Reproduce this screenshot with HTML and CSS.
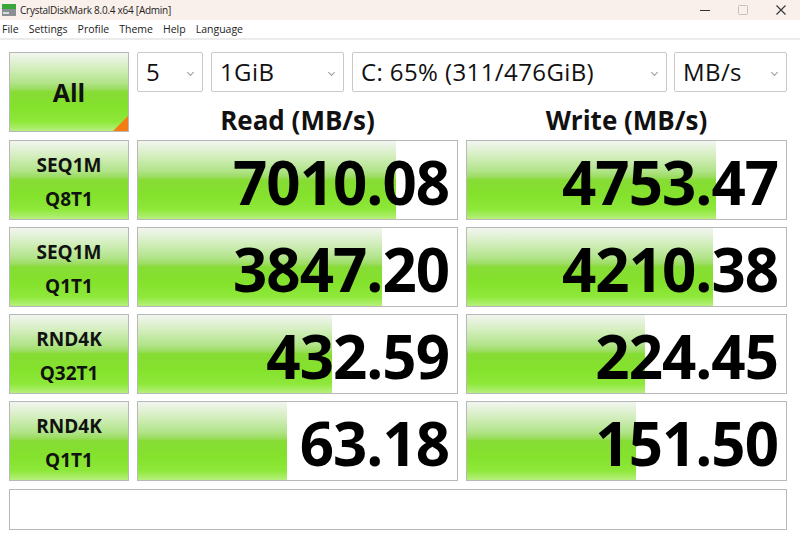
FILE: index.html
```html
<!DOCTYPE html>
<html lang="en">
<head>
    <meta charset="UTF-8">
    <title>CrystalDiskMark 8.0.4 x64 [Admin]</title>
    <link rel="stylesheet" href="styles.css">
</head>
<body>
    <div class="titlebar">
        <svg class="app-icon" width="14" height="14" viewBox="0 0 14 14">
            <rect x="0" y="1" width="14" height="5" fill="#3aa63a"/>
            <rect x="0" y="6" width="14" height="7" fill="#8a8f94"/>
            <rect x="1" y="9" width="6" height="2" fill="#d8dcdf"/>
        </svg>
        <span class="title">CrystalDiskMark 8.0.4 x64 [Admin]</span>
        <div class="controls">
            <svg width="12" height="12" viewBox="0 0 12 12"><line x1="1" y1="6.5" x2="11" y2="6.5" stroke="#333" stroke-width="1"/></svg>
            <svg width="12" height="12" viewBox="0 0 12 12"><rect x="1.5" y="1.5" width="9" height="9" rx="1" fill="none" stroke="#c4c0bd" stroke-width="1"/></svg>
            <svg width="12" height="12" viewBox="0 0 12 12"><path d="M1.5 1.5 L10.5 10.5 M10.5 1.5 L1.5 10.5" stroke="#333" stroke-width="1.1"/></svg>
        </div>
    </div>
    <div class="menubar">
        <span>File</span>
        <span>Settings</span>
        <span>Profile</span>
        <span>Theme</span>
        <span>Help</span>
        <span>Language</span>
    </div>

    <div class="panel">
        <div class="top">
            <div class="all-button green">All<span class="corner"></span></div>
            <div class="top-right">
                <div class="selects">
                    <div class="select sel-count">5<span class="chev"></span></div>
                    <div class="select sel-size">1GiB<span class="chev"></span></div>
                    <div class="select sel-drive">C: 65% (311/476GiB)<span class="chev"></span></div>
                    <div class="select sel-unit">MB/s<span class="chev"></span></div>
                </div>
                <div class="headers">
                    <div class="head">Read (MB/s)</div>
                    <div class="head">Write (MB/s)</div>
                </div>
            </div>
        </div>

        <div class="row">
            <div class="label green">SEQ1M<br>Q8T1</div>
            <div class="value"><div class="fill" style="width: 258px"></div><span>7010.08</span></div>
            <div class="value"><div class="fill" style="width: 249px"></div><span>4753.47</span></div>
        </div>
        <div class="row">
            <div class="label green">SEQ1M<br>Q1T1</div>
            <div class="value"><div class="fill" style="width: 244px"></div><span>3847.20</span></div>
            <div class="value"><div class="fill" style="width: 246px"></div><span>4210.38</span></div>
        </div>
        <div class="row">
            <div class="label green">RND4K<br>Q32T1</div>
            <div class="value"><div class="fill" style="width: 194px"></div><span>432.59</span></div>
            <div class="value"><div class="fill" style="width: 178px"></div><span>224.45</span></div>
        </div>
        <div class="row">
            <div class="label green">RND4K<br>Q1T1</div>
            <div class="value"><div class="fill" style="width: 149px"></div><span>63.18</span></div>
            <div class="value"><div class="fill" style="width: 169px"></div><span>151.50</span></div>
        </div>

        <div class="status"></div>
    </div>
</body>
</html>
```

FILE: styles.css
```css
body {
    margin: 0;
    padding: 0;
    background-color: #fff;
    font-family: 'Open Sans', 'Noto Sans', sans-serif;
    color: #000;
    width: 800px;
    height: 542px;
    overflow: hidden;
}

.titlebar {
    height: 20px;
    background-color: #faf0eb;
    display: flex;
    align-items: center;
    font-size: 10px;
    letter-spacing: -0.25px;
    color: #222;
}

.app-icon {
    margin-left: 2px;
    margin-right: 4px;
}

.title {
    line-height: 20px;
}

.controls {
    margin-left: auto;
    display: flex;
    gap: 26px;
    margin-right: 13px;
}

.menubar {
    height: 18px;
    display: flex;
    align-items: center;
    gap: 10px;
    padding-left: 2px;
    font-size: 10.5px;
    color: #222;
    border-bottom: 2px solid #ececec;
}

.panel {
    padding: 12px 0 0 9px;
    display: flex;
    flex-direction: column;
    gap: 7px;
}

.green {
    background: linear-gradient(to bottom,
        #f2f5f0 0%,
        #d6efc2 18%,
        #b2e48a 38%,
        #9cdd62 46%,
        #86dc34 50%,
        #84e22c 70%,
        #8ee83a 88%,
        #b6f07c 100%);
}

.top {
    display: flex;
    gap: 8px;
    margin-bottom: 1px;
}

.all-button {
    position: relative;
    width: 118px;
    height: 78px;
    border: 1px solid #b8b8b8;
    display: flex;
    align-items: center;
    justify-content: center;
    font-size: 25px;
    font-weight: bold;
    color: #111;
}

.corner {
    position: absolute;
    right: 0;
    bottom: 0;
    width: 0;
    height: 0;
    border-left: 15px solid transparent;
    border-bottom: 15px solid #f57c14;
}

.top-right {
    display: flex;
    flex-direction: column;
    width: 650px;
}

.selects {
    display: flex;
    gap: 8px;
    height: 40px;
}

.select {
    position: relative;
    box-sizing: border-box;
    height: 40px;
    border: 1px solid #c9c9c9;
    border-radius: 2px;
    padding-left: 8px;
    font-size: 24px;
    letter-spacing: 0.4px;
    line-height: 38px;
    color: #111;
}

.sel-count { width: 66px; }
.sel-size { width: 133px; }
.sel-drive { width: 315px; }
.sel-unit { width: 113px; margin-left: -1px; }

.chev {
    position: absolute;
    right: 9px;
    top: 17px;
    width: 4px;
    height: 4px;
    border-right: 1px solid #9a9a9a;
    border-bottom: 1px solid #9a9a9a;
    transform: rotate(45deg);
}

.headers {
    display: flex;
    gap: 8px;
    height: 40px;
}

.head {
    width: 321px;
    text-align: center;
    font-size: 26px;
    font-weight: bold;
    line-height: 1;
    padding-top: 15px;
    box-sizing: border-box;
    height: 40px;
    color: #111;
}

.row {
    display: flex;
    gap: 8px;
    height: 80px;
}

.label {
    box-sizing: border-box;
    width: 120px;
    height: 80px;
    border: 1px solid #b8b8b8;
    text-align: center;
    font-size: 19px;
    font-weight: bold;
    line-height: 34px;
    padding-top: 7px;
    color: #111;
}

.value {
    position: relative;
    box-sizing: border-box;
    width: 321px;
    height: 80px;
    border: 1px solid #b8b8b8;
    background-color: #fff;
    display: flex;
    align-items: center;
    justify-content: flex-end;
    padding: 4px 8px 0 0;
}

.value .fill {
    position: absolute;
    left: 0;
    top: 0;
    bottom: 0;
    background: linear-gradient(to bottom,
        #f2f5f0 0%,
        #d6efc2 18%,
        #b2e48a 38%,
        #9cdd62 46%,
        #86dc34 50%,
        #84e22c 70%,
        #8ee83a 88%,
        #b6f07c 100%);
}

.value span {
    position: relative;
    line-height: 1;
    font-size: 60px;
    font-weight: bold;
    letter-spacing: -1px;
    color: #000;
}

.status {
    box-sizing: border-box;
    width: 778px;
    height: 41px;
    margin-top: 1px;
    border: 1px solid #b8b8b8;
}
```
